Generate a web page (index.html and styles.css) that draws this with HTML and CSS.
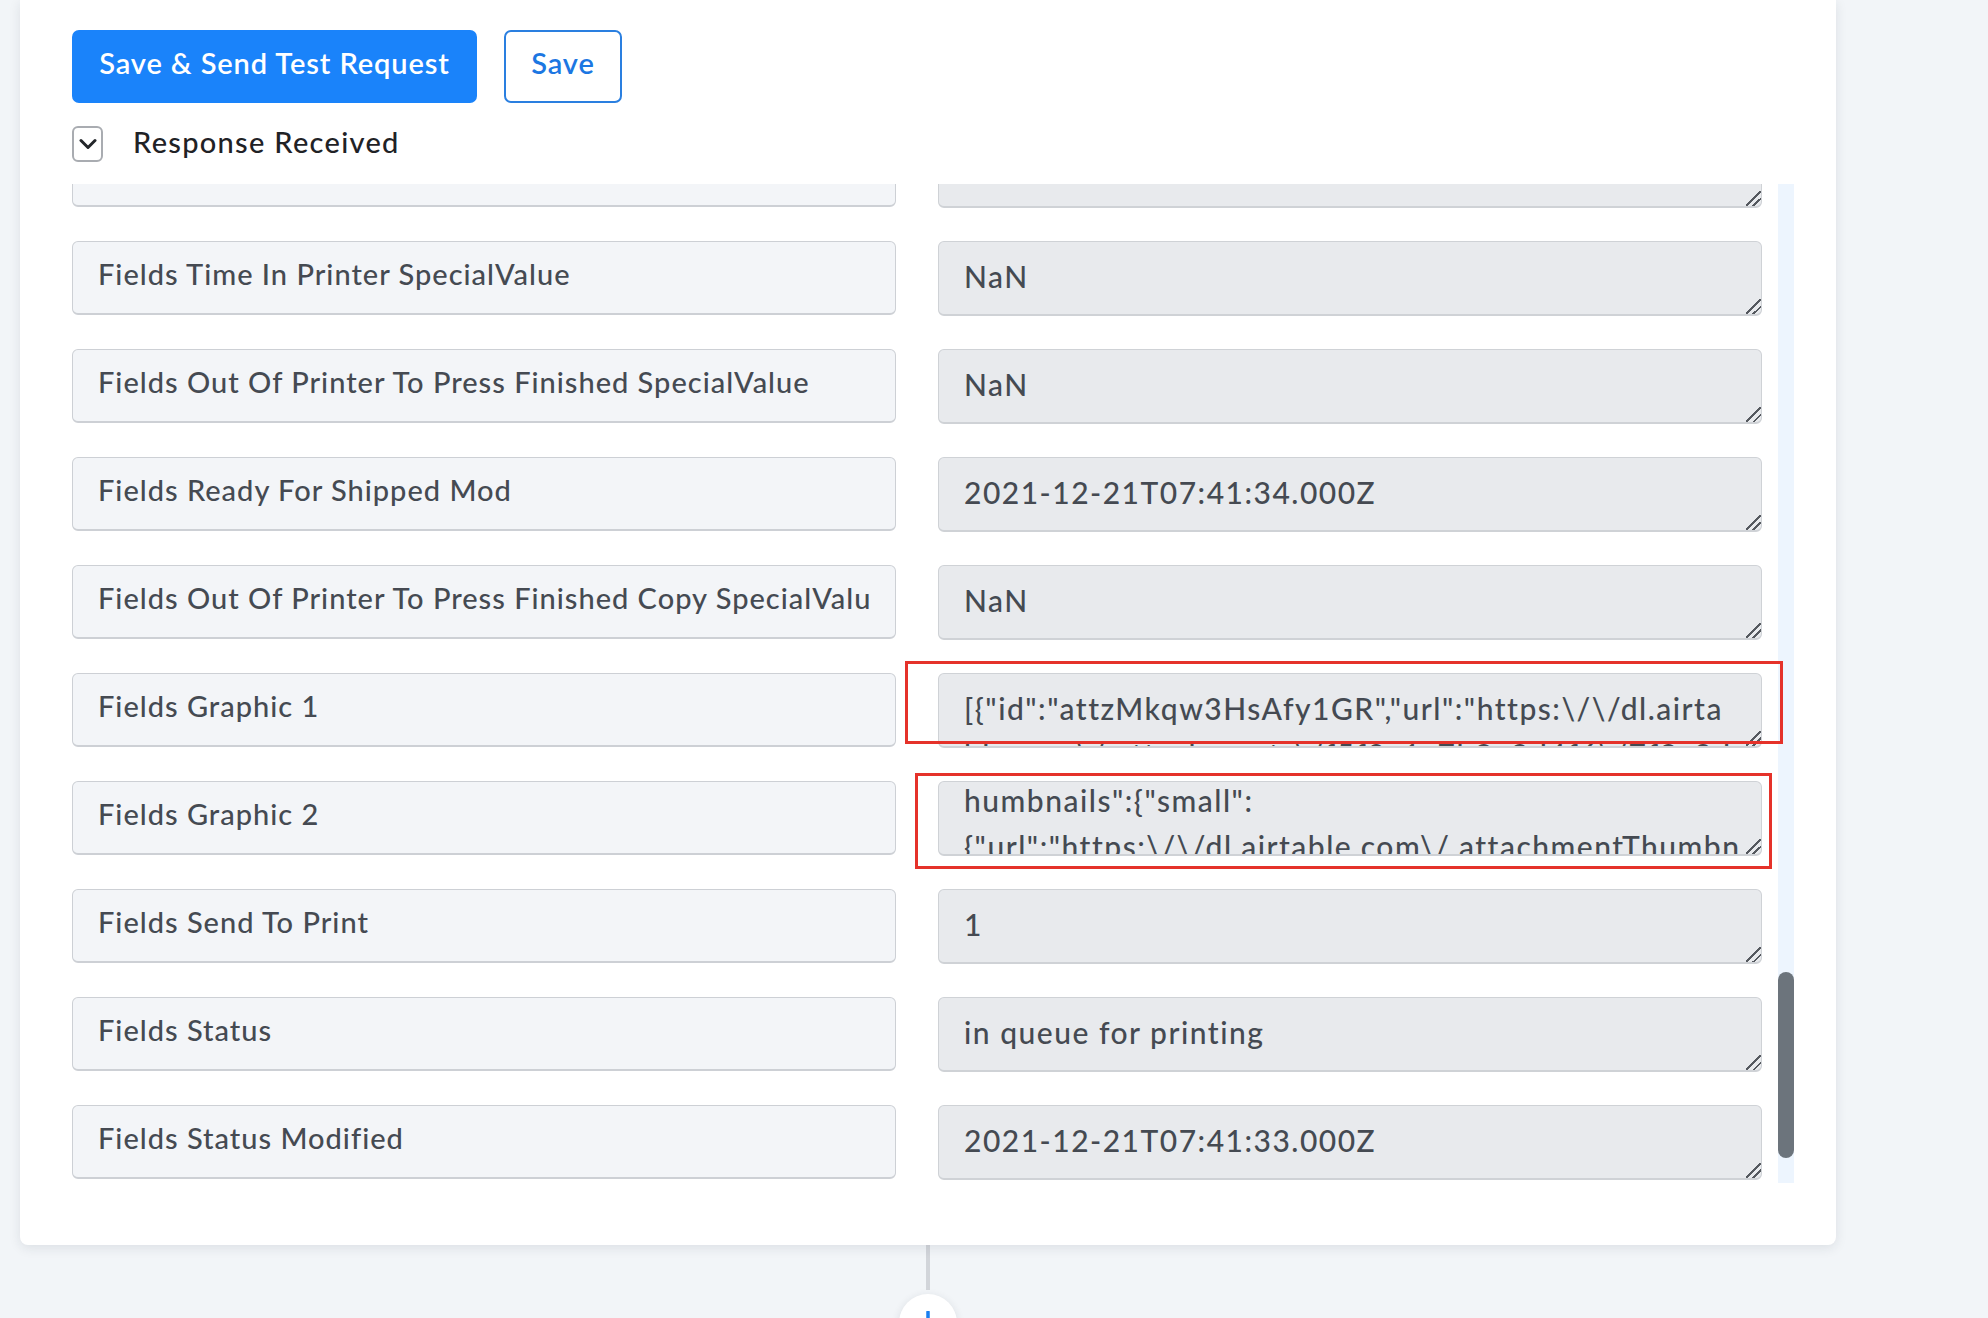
FILE: index.html
```html
<!DOCTYPE html>
<html lang="en">
<head>
<meta charset="utf-8">
<title>Response Received</title>
<link rel="stylesheet" href="styles.css">
</head>
<body>
<main class="page">
  <section class="card">
    <div class="actions">
      <button class="btn btn-primary" type="button">Save &amp; Send Test Request</button>
      <button class="btn btn-outline" type="button">Save</button>
    </div>

    <div class="response-toggle">
      <span class="check">
        <svg viewBox="0 0 18 18" width="18" height="18" aria-hidden="true">
          <polyline points="2,5.5 9,12.5 16,5.5" fill="none" stroke="#23262a" stroke-width="3" stroke-linecap="round" stroke-linejoin="round"/>
        </svg>
      </span>
      <span class="response-label">Response Received</span>
    </div>

    <div class="response">
      <div class="fields-viewport">
        <div class="fields">
          <div class="field-name"></div>
          <textarea class="field-value" readonly></textarea>

          <div class="field-name">Fields Time In Printer SpecialValue</div>
          <textarea class="field-value" readonly>NaN</textarea>

          <div class="field-name">Fields Out Of Printer To Press Finished SpecialValue</div>
          <textarea class="field-value" readonly>NaN</textarea>

          <div class="field-name">Fields Ready For Shipped Mod</div>
          <textarea class="field-value" readonly>2021-12-21T07:41:34.000Z</textarea>

          <div class="field-name">Fields Out Of Printer To Press Finished Copy SpecialValu</div>
          <textarea class="field-value" readonly>NaN</textarea>

          <div class="field-name">Fields Graphic 1</div>
          <textarea class="field-value" readonly>[{"id":"attzMkqw3HsAfy1GR","url":"https:\/\/dl.airta
ble.com\/.attachments\/f5f0a1c7b2e8d4f6\/7f2c9d1e\/graphic.png","filename":"graphic.png","size":48213,"type":"image\/png","t
humbnails":{"small":
{"url":"https:\/\/dl.airtable.com\/.attachmentThumbnails\/small.png"}}}]</textarea>

          <div class="field-name">Fields Graphic 2</div>
          <textarea class="field-value" data-scroll="16" readonly>humbnails":{"small":
{"url":"https:\/\/dl.airtable.com\/.attachmentThumbn
ails\/0c2d"}}}]</textarea>

          <div class="field-name">Fields Send To Print</div>
          <textarea class="field-value" readonly>1</textarea>

          <div class="field-name">Fields Status</div>
          <textarea class="field-value" readonly>in queue for printing</textarea>

          <div class="field-name">Fields Status Modified</div>
          <textarea class="field-value" readonly>2021-12-21T07:41:33.000Z</textarea>
        </div>
      </div>
      <div class="scroll-track"><div class="scroll-thumb"></div></div>
    </div>

    <div class="annotation annotation-graphic-1"></div>
    <div class="annotation annotation-graphic-2"></div>
  </section>

  <div class="connector"></div>
  <div class="add-step">
    <svg viewBox="0 0 24 24" width="24" height="24" aria-hidden="true">
      <path d="M12 1 V23 M1 12 H23" stroke="#1a7ff0" stroke-width="3.5" stroke-linecap="round" fill="none"/>
    </svg>
  </div>
</main>
<script src="script.js"></script>
</body>
</html>
```

FILE: styles.css
```css
html, body {
  margin: 0;
  padding: 0;
  height: 100%;
  overflow: hidden;
  background: #f2f5f8;
  font-family: "Lato", "Liberation Sans", sans-serif;
}

.page {
  width: 1816px;
  padding-left: 20px;
  display: flex;
  flex-direction: column;
  align-items: center;
}

.card {
  position: relative;
  box-sizing: border-box;
  width: 1816px;
  background: #ffffff;
  border-radius: 0 0 8px 8px;
  box-shadow: 0 3px 12px rgba(30, 40, 60, 0.10);
  padding: 30px 42px 62px 52px;
}

.actions {
  display: flex;
  gap: 27px;
}

.btn {
  box-sizing: border-box;
  height: 73px;
  border-radius: 7px;
  font-family: inherit;
  font-size: 29px;
  font-weight: 600;
  letter-spacing: 0.9px;
  line-height: 36px;
  cursor: pointer;
  padding: 0 20px 8px;
}

.btn-primary {
  width: 405px;
  background: #1a83fa;
  color: #ffffff;
  border: none;
}

.btn-outline {
  width: 118px;
  background: #ffffff;
  color: #1c77e2;
  border: 2px solid #2a7fe0;
}

.response-toggle {
  display: flex;
  align-items: center;
  margin-top: 23px;
  height: 36px;
}

.check {
  box-sizing: border-box;
  width: 31px;
  height: 36px;
  border: 2px solid #a9acb1;
  border-radius: 6px;
  display: flex;
  align-items: center;
  justify-content: center;
}

.response-label {
  margin-left: 30px;
  padding-bottom: 5px;
  font-size: 29px;
  font-weight: 500;
  line-height: 36px;
  letter-spacing: 1.3px;
  color: #1f2226;
}

.response {
  display: flex;
  gap: 16px;
  margin-top: 22px;
  height: 999px;
}

.fields-viewport {
  flex: 1;
  overflow: hidden;
}

.fields {
  margin-top: -51px;
  display: grid;
  grid-template-columns: 1fr 1fr;
  column-gap: 42px;
  row-gap: 33px;
  align-items: start;
}

.field-name {
  box-sizing: border-box;
  height: 74px;
  padding: 14px 25px 0;
  background: #f3f5f8;
  border: 1px solid #cdd0d5;
  border-bottom-width: 2px;
  border-radius: 6px;
  font-size: 29px;
  font-weight: 500;
  letter-spacing: 1px;
  line-height: 36px;
  color: #454a52;
  white-space: nowrap;
  overflow: hidden;
}

.field-value {
  display: block;
  box-sizing: border-box;
  width: 100%;
  height: 75px;
  margin: 0;
  padding: 11px 18px 0 25px;
  background: #e8eaed;
  border: 1px solid #cfd2d6;
  border-bottom-width: 2px;
  border-radius: 6px;
  font-family: inherit;
  font-size: 30px;
  font-weight: 500;
  letter-spacing: 1.5px;
  line-height: 46px;
  color: #454a52;
  resize: vertical;
  overflow: hidden;
  outline: none;
}

.field-value::-webkit-resizer {
  background: linear-gradient(135deg,
    transparent 0 46%,
    #55595f 46% 54%,
    transparent 54% 70%,
    #55595f 70% 78%,
    transparent 78%);
}

.scroll-track {
  width: 16px;
  background: #edf5fe;
}

.scroll-thumb {
  margin-top: 788px;
  height: 186px;
  border-radius: 8px;
  background: #6c747c;
}

.annotation {
  position: absolute;
  border: 3px solid #e5322a;
  box-sizing: border-box;
  pointer-events: none;
}

.annotation-graphic-1 {
  left: 885px;
  top: 661px;
  width: 878px;
  height: 83px;
}

.annotation-graphic-2 {
  left: 895px;
  top: 773px;
  width: 857px;
  height: 96px;
}

.connector {
  width: 4px;
  height: 45px;
  background: #d2d5da;
}

.add-step {
  margin-top: 4px;
  width: 58px;
  height: 58px;
  border-radius: 50%;
  background: #ffffff;
  box-shadow: 0 2px 8px rgba(30, 40, 60, 0.12);
  display: flex;
  align-items: center;
  justify-content: center;
}
```

FILE: script.js
```js
document.querySelectorAll('[data-scroll]').forEach(function (el) {
  el.scrollTop = Number(el.dataset.scroll);
});
```
